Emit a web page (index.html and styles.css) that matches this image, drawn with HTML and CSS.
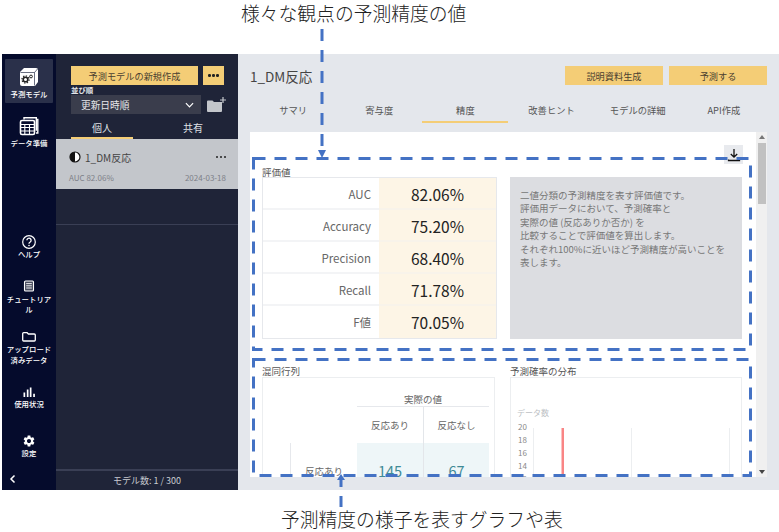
FILE: index.html
```html
<!DOCTYPE html>
<html lang="ja">
<head>
<meta charset="utf-8">
<title>精度</title>
<link rel="stylesheet" href="styles.css">
</head>
<body>
<div class="page">
  <div class="caption caption-top">様々な観点の予測精度の値</div>
  <div class="app">
    <nav class="rail">
      <div class="rail-item active">
        <svg class="ico-lg" viewBox="0 0 20 20"><path fill="#fff" d="M5 1h12a2 2 0 0 1 2 2v12l-3 4H3a2 2 0 0 1-2-2V5z"/><path fill="none" stroke="#2a304a" stroke-width=".7" d="M1.500 5.500H15.500V18.500M15.500 5.500L18.500 2"/><circle cx="6.500" cy="12.500" r="2.300" fill="none" stroke="#222" stroke-width="1.600"/><circle cx="6.500" cy="12.500" r="3.600" fill="none" stroke="#222" stroke-width="1.200" stroke-dasharray="1.400 1.400"/><circle cx="12" cy="9.500" r="1.400" fill="none" stroke="#222" stroke-width="1"/></svg>
        <span>予測モデル</span>
      </div>
      <div class="rail-item second">
        <svg class="ico-lg" viewBox="0 0 20 20"><path fill="none" stroke="#fff" stroke-width="1.400" d="M5 3.500V1.700h12.300v13M17.300 3.500h1.500v13.500H17"/><rect x="1.500" y="4.500" width="14" height="14" rx="1.500" fill="#050b2c" stroke="#fff" stroke-width="1.600"/><path fill="none" stroke="#fff" stroke-width="1.100" d="M1.500 8.500h14M1.500 11.500h14M1.500 15h14M5.800 8.500v10M10.500 8.500v10"/></svg>
        <span>データ準備</span>
      </div>
      <div class="rail-item lower help">
        <svg class="ico" viewBox="0 0 16 16"><circle cx="8" cy="8" r="6.300" fill="none" stroke="#fff" stroke-width="1.200"/><path fill="none" stroke="#fff" stroke-width="1.300" d="M5.900 6.300a2.100 2.100 0 1 1 3.300 1.700c-.8.500-1.200 1-1.200 1.800"/><circle cx="8" cy="11.500" r=".8" fill="#fff"/></svg>
        <span>ヘルプ</span>
      </div>
      <div class="rail-item lower tutorial">
        <svg class="ico" viewBox="0 0 16 16"><rect x="3.500" y="3" width="9" height="10" rx="1" fill="#4a4e60" stroke="#fff" stroke-width="1.100"/><path stroke="#fff" stroke-width=".9" d="M5.200 5.600h5.600M5.200 7.800h5.600M5.200 10h5.600"/></svg>
        <span>チュートリア<br>ル</span>
      </div>
      <div class="rail-item lower upload">
        <svg class="ico" viewBox="0 0 16 16"><path fill="none" stroke="#fff" stroke-width="1.300" d="M1.700 4.700a1 1 0 0 1 1-1h3.400l1.300 1.300h5.900a1 1 0 0 1 1 1v5a1 1 0 0 1-1 1H2.700a1 1 0 0 1-1-1z"/></svg>
        <span>アップロード<br>済みデータ</span>
      </div>
      <div class="rail-item lower usage">
        <svg class="ico" viewBox="0 0 16 16"><path fill="#fff" d="M2.500 8.500h1.700v4.500H2.500zM5.800 5.500h1.700V13H5.800zM8.800 3.500h1.700V13H8.800zM12.200 9.800h1.700V13h-1.700z"/></svg>
        <span>使用状況</span>
      </div>
      <div class="rail-item lower settings">
        <svg class="ico" viewBox="-2 -2 28 28"><path fill="#fff" d="M19.140 12.940c.04-.3.06-.61.06-.94 0-.32-.02-.64-.07-.94l2.030-1.580c.18-.14.23-.41.12-.61l-1.920-3.320c-.12-.22-.37-.29-.59-.22l-2.390.96c-.5-.38-1.030-.7-1.620-.94l-.36-2.540c-.04-.24-.24-.41-.48-.41h-3.840c-.24 0-.43.17-.47.41l-.36 2.540c-.59.24-1.130.57-1.620.94l-2.390-.96c-.22-.08-.47 0-.59.22L2.740 8.870c-.12.21-.08.47.12.61l2.030 1.580c-.05.3-.09.63-.09.94s.02.64.07.94l-2.030 1.580c-.18.14-.23.41-.12.61l1.920 3.320c.12.22.37.29.59.22l2.390-.96c.5.38 1.030.7 1.620.94l.36 2.540c.05.24.24.41.48.41h3.840c.24 0 .44-.17.47-.41l.36-2.540c.59-.24 1.130-.56 1.620-.94l2.390.96c.22.08.47 0 .59-.22l1.920-3.320c.12-.22.07-.47-.12-.61l-2.010-1.580zM12 15.600c-1.980 0-3.600-1.620-3.600-3.600s1.620-3.600 3.600-3.600 3.600 1.620 3.600 3.600-1.620 3.600-3.600 3.600z"/></svg>
        <span>設定</span>
      </div>
      <div class="rail-collapse">
        <svg class="chev" viewBox="0 0 8 10"><path fill="none" stroke="#fff" stroke-width="1.500" d="M5.500 1.500L2 5l3.500 3.500"/></svg>
      </div>
    </nav>

    <aside class="panel">
      <div class="panel-actions">
        <div class="btn btn-new">予測モデルの新規作成</div>
        <div class="btn btn-more"><i></i><i></i><i></i></div>
      </div>
      <div class="sort-label">並び順</div>
      <div class="sort-row">
        <div class="select">
          <span>更新日時順</span>
          <svg class="select-chev" viewBox="0 0 10 6"><path fill="none" stroke="#fff" stroke-width="1.300" d="M1 1l4 4 4-4"/></svg>
        </div>
        <svg class="folder-add" viewBox="0 0 20 16"><path fill="#c3c6cb" d="M1 4.500a1 1 0 0 1 1-1h4.500l1.500 1.500h8v9a1 1 0 0 1-1 1H2a1 1 0 0 1-1-1z"/><path stroke="#c3c6cb" stroke-width="1.200" d="M17 0v6M14 3h6"/></svg>
      </div>
      <div class="scope-tabs">
        <div class="scope-tab on">個人</div>
        <div class="scope-tab">共有</div>
      </div>
      <div class="model-card">
        <div class="model-top">
          <svg class="half" viewBox="0 0 12 12"><circle cx="6" cy="6" r="5" fill="#fff" stroke="#111" stroke-width="1.200"/><path fill="#111" d="M6 1a5 5 0 0 0 0 10z"/></svg>
          <span class="model-name">1_DM反応</span>
          <div class="dots"><i></i><i></i><i></i></div>
        </div>
        <div class="model-sub"><span>AUC 82.06%</span><span>2024-03-18</span></div>
      </div>
      <div class="list-rest"></div>
      <div class="panel-foot">モデル数: 1 / 300</div>
    </aside>

    <main class="main">
      <header class="main-head">
        <h1 class="title">1_DM反応</h1>
        <div class="head-btns">
          <div class="btn btn-head">説明資料生成</div>
          <div class="btn btn-head">予測する</div>
        </div>
      </header>
      <div class="tabs">
        <div class="tab">サマリ</div>
        <div class="tab">寄与度</div>
        <div class="tab on">精度</div>
        <div class="tab">改善ヒント</div>
        <div class="tab">モデルの詳細</div>
        <div class="tab">API作成</div>
      </div>
      <div class="sheet">
        <div class="scroll">
          <div class="tool-row">
            <div class="dl">
              <svg viewBox="0 0 14 14"><path fill="none" stroke="#111" stroke-width="1.300" d="M7 1v8M3.800 6L7 9.200 10.200 6M1.500 11.500v1h11v-1"/></svg>
            </div>
          </div>
          <div class="sec-title">評価値</div>
          <div class="metrics-grid">
            <div class="metrics">
              <div class="m-name">AUC</div><div class="m-val">82.06%</div>
              <div class="m-name">Accuracy</div><div class="m-val">75.20%</div>
              <div class="m-name">Precision</div><div class="m-val">68.40%</div>
              <div class="m-name">Recall</div><div class="m-val">71.78%</div>
              <div class="m-name">F値</div><div class="m-val">70.05%</div>
            </div>
            <div class="desc">二値分類の予測精度を表す評価値です。<br>評価用データにおいて、予測確率と<br>実際の値 (反応ありか否か) を<br>比較することで評価値を算出します。<br>それぞれ100%に近いほど予測精度が高いことを<br>表します。</div>
          </div>
          <div class="charts-grid">
            <div>
              <div class="sec-title">混同行列</div>
              <div class="box">
                <div class="matrix">
                  <div class="mx-actual">実際の値</div>
                  <div class="mx-col">反応あり</div>
                  <div class="mx-col mx-div">反応なし</div>
                  <div class="mx-row">反応あり</div>
                  <div class="mx-num">145</div>
                  <div class="mx-num mx-div">67</div>
                </div>
              </div>
            </div>
            <div>
              <div class="sec-title">予測確率の分布</div>
              <div class="box">
                <svg class="hist" viewBox="0 0 230 130">
                  <text class="ax-title" x="6" y="38">データ数</text>
                  <text class="ax" x="16" y="52">20</text>
                  <text class="ax" x="16" y="65">18</text>
                  <text class="ax" x="16" y="78">16</text>
                  <text class="ax" x="16" y="91">14</text>
                  <text class="ax" x="16" y="104">12</text>
                  <path class="grid-line" d="M22.500 50V130M120.500 50V130M218.500 50V130"/>
                  <rect class="bar" x="50.500" y="50" width="2.500" height="80"/>
                </svg>
              </div>
            </div>
          </div>
        </div>
        <div class="scrollbar">
          <svg class="sb-arrow" viewBox="0 0 6 4"><path fill="#777" d="M0 4l3-4 3 4z"/></svg>
          <div class="sb-thumb"></div>
          <svg class="sb-arrow" viewBox="0 0 6 4"><path fill="#444" d="M0 0l3 4 3-4z"/></svg>
        </div>
      </div>
    </main>
  </div>
  <div class="caption caption-bottom">予測精度の様子を表すグラフや表</div>

  <svg class="marks" viewBox="0 0 779 532">
    <path class="dash" d="M322 29V150"/>
    <path class="head" d="M318 150h8l-4 8z"/>
    <rect class="dash" x="253.500" y="158.500" width="497" height="191"/>
    <rect class="dash" x="253.500" y="359.500" width="497" height="116"/>
    <path class="head" d="M341 474l4 6h-8z"/>
    <path class="dash dash-b" d="M341 507V480"/>
  </svg>
</div>
</body>
</html>
```
FILE: styles.css
```css
* { box-sizing: border-box; }
html, body { margin: 0; background: #fff; }
body { font-family: "Noto Sans CJK JP", "Noto Sans", sans-serif; color: #444; }
.page { position: relative; width: 779px; height: 532px; overflow: hidden; }

.caption { font-size: 18.8px; font-weight: 300; color: #222; line-height: 26px; white-space: nowrap; }
.caption-top { height: 54px; padding: 0 0 0 241px; }
.caption-bottom { height: 42px; padding: 16px 0 0 281px; }

.app { display: flex; height: 436px; margin-left: 2px; }

.rail { width: 54px; background: #050b2c; display: flex; flex-direction: column; padding-top: 5px; color: #fff; flex: none; }
.rail-item { display: flex; flex-direction: column; align-items: center; font-size: 7.400px; font-weight: 500; line-height: 10px; text-align: center; white-space: nowrap; }
.rail-item.active { margin: 0 3px; height: 44px; padding-top: 8px; background: #2a304a; border-radius: 1px; }
.ico-lg { width: 20px; height: 20px; margin-bottom: 2px; display: block; }
.second { margin-top: 5px; padding-top: 8px; }
.ico { width: 16px; height: 16px; display: block; }
.help { margin-top: 86px; }
.help span { margin-top: -1px; }
.tutorial { margin-top: 19px; }
.upload { margin-top: 15px; line-height: 11px; }
.upload span { margin-top: -2px; }
.usage { margin-top: 19px; }
.usage span { margin-top: -1px; }
.settings { margin-top: 24px; }
.settings span { margin-top: -1px; }
.rail-collapse { margin-top: 16px; padding-left: 7px; }
.chev { width: 8px; height: 10px; display: block; }

.panel { width: 182px; flex: none; background: #1f2438; display: flex; flex-direction: column; color: #d8dade; }
.panel-actions { display: flex; gap: 5px; margin: 12px 0 0 15px; }
.btn { background: #f4cd76; color: #4a4030; font-size: 9.200px; display: flex; align-items: center; justify-content: center; height: 19px; white-space: nowrap; }
.btn-new { width: 127px; }
.btn-more { width: 21px; gap: 1.500px; }
.btn-more i, .dots i { width: 2.500px; height: 2.500px; border-radius: 50%; background: #222; display: block; }
.sort-label { font-size: 7.400px; line-height: 10px; font-weight: 700; margin-left: 15px; color: #e4e5e8; }
.sort-row { display: flex; align-items: center; margin-left: 15px; gap: 5px; }
.select { width: 130px; height: 19px; background: #3a3d4c; display: flex; align-items: center; justify-content: space-between; padding: 0 7px 0 10px; font-size: 9.700px; color: #e6e7ea; }
.select-chev { width: 9px; height: 6px; }
.folder-add { width: 20px; height: 16px; }
.scope-tabs { display: flex; justify-content: space-between; margin: 0 14px 0 15px; height: 25px; }
.scope-tab { width: 62px; text-align: center; font-size: 10px; line-height: 28px; color: #dfe0e4; }
.scope-tab.on { border-bottom: 2px solid #f4cd76; }
.model-card { height: 50px; background: #c3c6cb; padding: 9px 12px 0 13px; display: flex; flex-direction: column; }
.model-top { display: flex; align-items: center; height: 18px; color: #444; }
.half { width: 12px; height: 12px; margin-right: 4px; }
.model-name { font-size: 10px; flex: 1; }
.dots { display: flex; gap: 1.500px; }
.model-sub { display: flex; justify-content: space-between; font-size: 8px; color: #7d8088; margin-top: 6px; line-height: 12px; }
.list-rest { height: 36px; border-bottom: 1px solid #3a3f55; }
.panel-foot { margin-top: auto; height: 21px; border-top: 2px solid #3a3f55; text-align: center; font-size: 9px; line-height: 20px; color: #c9cbd1; }

.main { flex: 1; min-width: 0; background: #e4e7ec; padding: 12px 12px 13px; display: flex; flex-direction: column; }
.main-head { display: flex; justify-content: space-between; align-items: center; height: 19px; }
.title { margin: 0; font-size: 13.500px; font-weight: 400; color: #444; }
.head-btns { display: flex; gap: 6px; }
.btn-head { width: 98px; }
.tabs { display: grid; grid-template-columns: repeat(6, 1fr); margin-top: 14px; height: 22px; }
.tab { text-align: center; font-size: 9.300px; line-height: 22px; color: #555; }
.tab.on { border-bottom: 2px solid #f4cd76; }
.sheet { margin-top: 11px; height: 345px; background: #fff; display: flex; }
.scroll { flex: 1; min-width: 0; overflow: hidden; padding: 13px 13px 0 12px; }
.tool-row { display: flex; justify-content: flex-end; height: 19px; }
.dl { width: 19px; height: 19px; background: #e8eaee; display: flex; align-items: center; justify-content: center; }
.dl svg { width: 14px; height: 14px; }
.sec-title { font-size: 9.500px; line-height: 11px; color: #555; }
.tool-row + .sec-title { margin-top: 3px; line-height: 10px; }
.metrics-grid { display: grid; grid-template-columns: 235px 232px; column-gap: 13px; height: 162px; }
.metrics { border: 1px solid #e6e8ec; display: grid; grid-template-columns: 116px 1fr; grid-auto-rows: 32px; }
.m-name { font-size: 11.500px; color: #666; text-align: right; padding-right: 8px; line-height: 33px; border-bottom: 2px solid #f3f4f6; }
.m-val { font-size: 15.500px; color: #222; text-align: center; line-height: 33px; background: #fdf5e6; border-bottom: 2px solid #f8f3ea; }
.m-name:nth-last-child(2), .m-val:last-child { border-bottom: 0; }
.desc { background: #dcdde1; padding: 12px 10px; font-size: 9.500px; line-height: 13.400px; color: #777; white-space: nowrap; }
.charts-grid { display: grid; grid-template-columns: 233px 232px; column-gap: 15px; margin-top: 27px; }
.box { border: 1px solid #eceef0; height: 140px; overflow: hidden; }
.matrix { display: grid; grid-template-columns: 27px 67px 66px 66px; grid-template-rows: 14px 36px 56px; margin-top: 15px; font-size: 9.500px; color: #666; text-align: center; }
.mx-actual { grid-column: 3 / 5; border-bottom: 1px solid #e6e8ec; line-height: 13px; }
.mx-col { line-height: 37px; }
.mx-col:nth-child(2) { grid-column: 3; }
.mx-row { grid-column: 2; border-left: 1px solid #e6e8ec; line-height: 56px; }
.mx-num { background: #eef6f8; font-size: 14.500px; color: #3f8a96; line-height: 56px; }
.mx-div { border-left: 1px solid #e3e6ea; }
.hist { width: 230px; height: 130px; display: block; }
.ax-title { font-size: 8px; fill: #bdbfc4; }
.ax { font-size: 8px; fill: #888; text-anchor: end; }
.grid-line { stroke: #eceef0; stroke-width: 1; fill: none; }
.bar { fill: #f98585; }
.scrollbar { width: 11px; flex: none; background: #f0f0f0; display: flex; flex-direction: column; align-items: center; padding-top: 3px; }
.sb-arrow { width: 6px; height: 4px; display: block; flex: none; }
.sb-thumb { width: 8px; height: 61px; margin-top: 4px; background: #c1c1c1; }
.sb-thumb + .sb-arrow { margin-top: auto; margin-bottom: 3px; }

.marks { position: absolute; left: 0; top: 0; width: 779px; height: 532px; pointer-events: none; }
.dash { fill: none; stroke: #4472c4; stroke-width: 3; stroke-dasharray: 12 9; }
.dash-b { stroke-dasharray: 11 9; }
.head { fill: #4472c4; }
```
